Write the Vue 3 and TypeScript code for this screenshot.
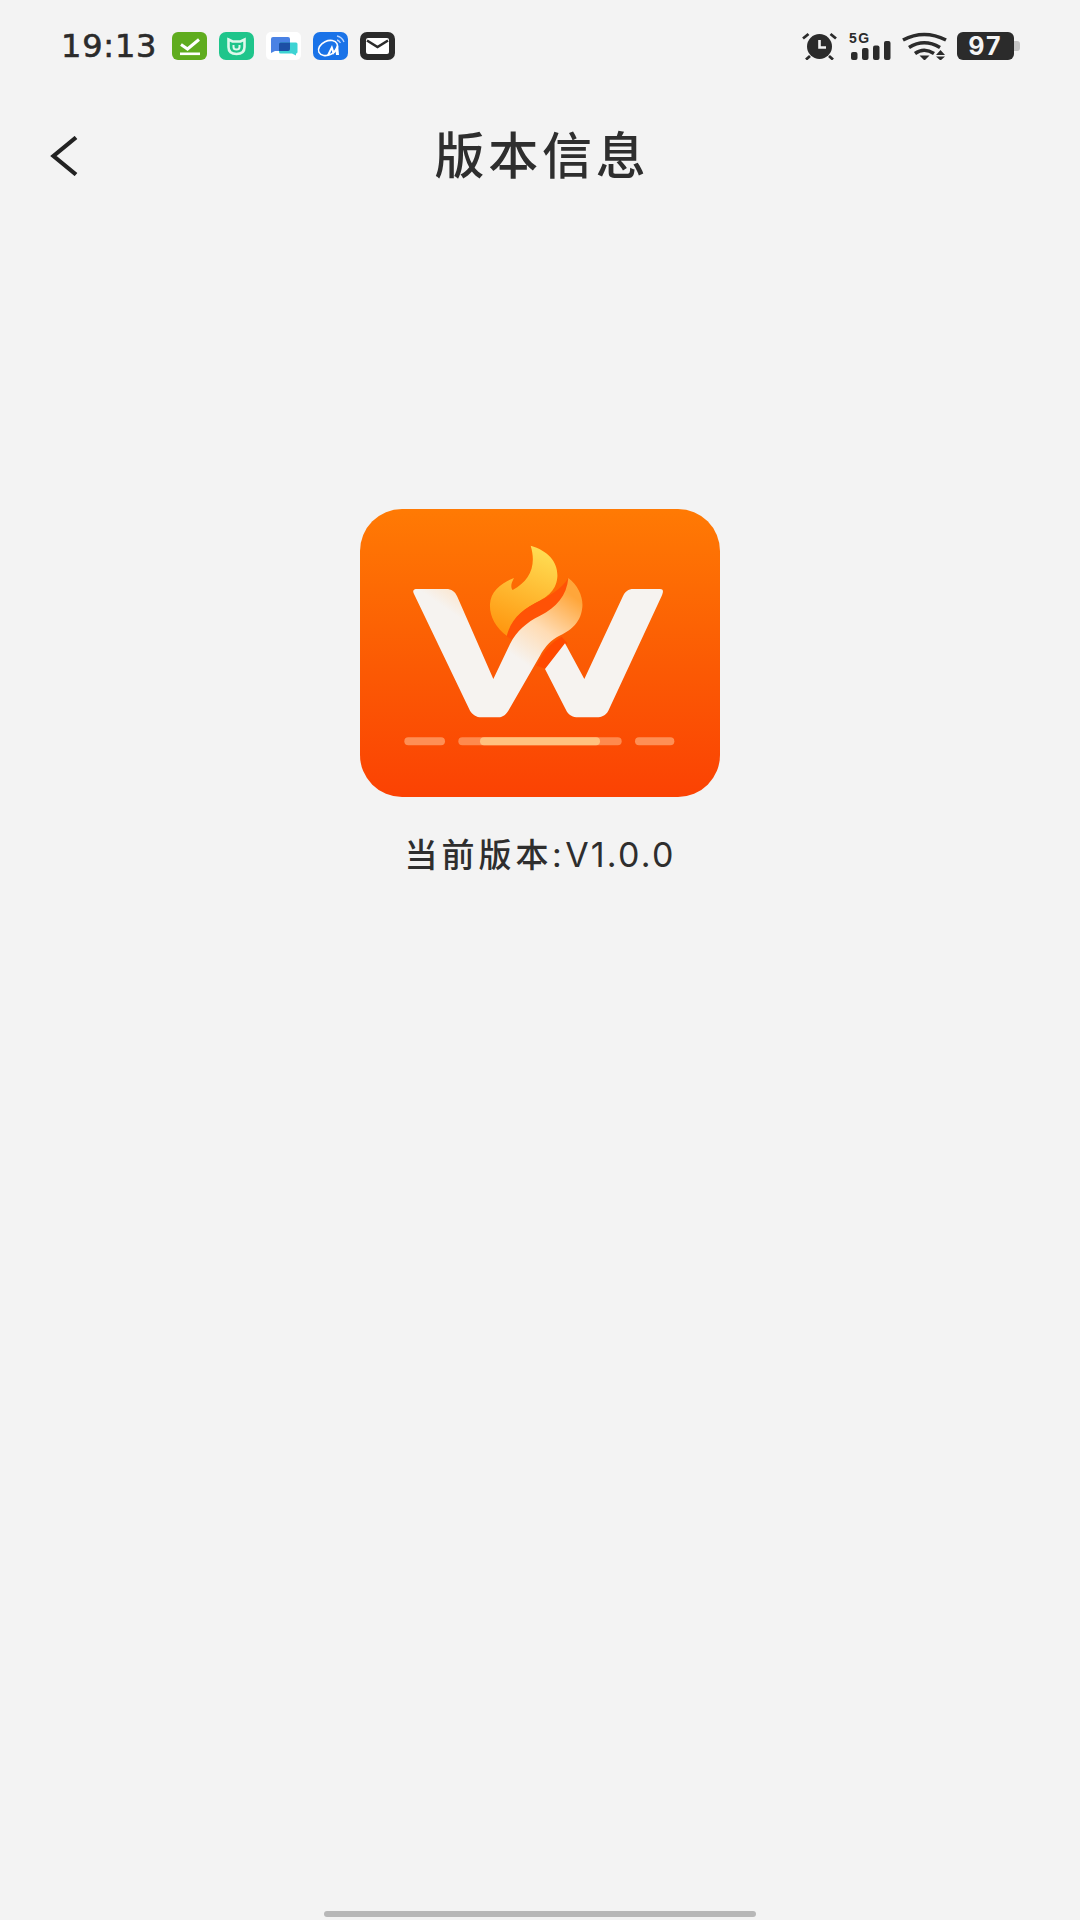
<template>
  <div class="page">
    <div class="status-bar">
      <span class="time">19:13</span>
      <div class="app-icons">
        <svg class="app-icon" viewBox="0 0 35 28">
          <rect width="35" height="28" rx="6" fill="#5fac1e" />
          <path d="M9 12.500l6.500 4.500L27 7.500" fill="none" stroke="#fff" stroke-width="3" />
          <rect x="8" y="20.500" width="20" height="2.600" fill="#fff" />
        </svg>
        <svg class="app-icon" viewBox="0 0 35 28">
          <rect width="35" height="28" rx="7" fill="#1fc58b" />
          <path d="M9.500 7.500l4 2h8l4-2V15q0 7-8 7t-8-7z" fill="none" stroke="#dff8ec" stroke-width="2.600" />
          <path d="M14.500 13v2q0 2.500 3 2.500t3-2.500v-2" fill="none" stroke="#dff8ec" stroke-width="2" />
        </svg>
        <svg class="app-icon" viewBox="0 0 35 28">
          <rect width="35" height="28" rx="5" fill="#fff" />
          <path d="M5 7q0-2 2-2h15q2 0 2 2v10q0 2-2 2H9l-4 2z" fill="#4a82e4" />
          <path d="M13 12q0-1.500 1.500-1.500H30q1.500 0 1.500 1.500v8q0 1.500-1.500 1.500v2l-4-2H14.500Q13 21.500 13 20z" fill="#3dd3d3" />
          <path d="M13 12q0-1.500 1.500-1.500H24V17q0 2-2 2h-9z" fill="#1d4fa5" />
        </svg>
        <svg class="app-icon" viewBox="0 0 35 28">
          <rect width="35" height="28" rx="7" fill="#1a73e8" />
          <ellipse cx="15" cy="16" rx="10" ry="7" transform="rotate(-25 15 16)" fill="none" stroke="#fff" stroke-width="1.600" />
          <path d="M14 23l5-10 2 6 4-7 1 11h-3l-.5-5-2.500 5-1.500-5-2 5z" fill="#fff" />
          <path d="M24 4q5 1 7 6M24 8q2 .5 3.500 3" fill="none" stroke="#bcd6ff" stroke-width="1.300" />
        </svg>
        <svg class="app-icon" viewBox="0 0 35 28">
          <rect width="35" height="28" rx="7" fill="#2b2b2b" />
          <rect x="6" y="6" width="23" height="16" rx="2" fill="#fff" />
          <path d="M7 8.500l10.500 6.500L28 8.500" fill="none" stroke="#2b2b2b" stroke-width="2.600" />
        </svg>
      </div>
      <div class="sys-icons">
        <svg class="alarm" viewBox="0 0 35 28">
          <circle cx="17.500" cy="14.500" r="12.500" fill="#2b2b2b" />
          <path d="M17.500 8v7.500h6.500" fill="none" stroke="#f3f3f3" stroke-width="2.600" />
          <path d="M1 6.500L6.500 2M34 6.500L28.500 2M8 24l-4 3.500M27 24l4 3.500" stroke="#2b2b2b" stroke-width="2.800" />
        </svg>
        <svg class="signal" viewBox="0 0 42 28">
          <text x="0" y="11" class="five-g">5G</text>
          <rect x="2" y="20" width="6.500" height="8" rx="2" fill="#2b2b2b" />
          <rect x="13" y="16" width="6.500" height="12" rx="2" fill="#2b2b2b" />
          <rect x="24" y="13.500" width="6.500" height="14.500" rx="2" fill="#2b2b2b" />
          <rect x="35" y="9" width="6.500" height="19" rx="2" fill="#2b2b2b" />
        </svg>
        <svg class="wifi" viewBox="0 0 45 28">
          <path d="M1 8Q22-3 44 8M7 15.500Q22 6 38 15.500M13 21.500Q22 15 32 21.500" fill="none" stroke="#2b2b2b" stroke-width="3.600" />
          <path d="M17.500 23.500h10l-5 5zM34 23l4.500-5 4.500 5zM34 24.500h9l-4.500 4z" fill="#2b2b2b" />
        </svg>
        <div class="battery">
          <span class="battery-body">97</span>
          <span class="battery-nub"></span>
        </div>
      </div>
    </div>

    <div class="nav-bar">
      <svg class="back" viewBox="0 0 28 40">
        <path d="M26 1.500L3.500 20 26 38.500" fill="none" stroke="#222" stroke-width="4.200" />
      </svg>
      <h1 class="title">版本信息</h1>
    </div>

    <main class="content">
      <div class="logo">
        <svg viewBox="60 55 1080 864">
          <defs>
            <linearGradient id="flame-top" x1="0.600" y1="0" x2="0.300" y2="1">
              <stop offset="0" stop-color="#ffdc52" />
              <stop offset="1" stop-color="#ff960f" />
            </linearGradient>
            <linearGradient id="flame-stripe" x1="0.300" y1="0.700" x2="0.850" y2="0.050">
              <stop offset="0.350" stop-color="#f6f3f0" />
              <stop offset="0.650" stop-color="#ffdcb4" />
              <stop offset="1" stop-color="#ffa63a" />
            </linearGradient>
          </defs>
          <path d="M572 165C625 180 655 215 652 260C648 305 615 322 585 338C540 362 512 395 502 437C465 410 448 375 450 340C452 305 480 278 522 262C512 280 512 290 518 298C570 270 590 225 572 165Z" fill="url(#flame-top)" />
          <path d="M500 437C512 390 540 362 585 338C630 315 665 295 685 262L700 310L600 400L520 450Z" fill="#ff5206" />
          <path d="M590 525C610 480 635 455 665 438L682 458L618 535Z" fill="#ff4a00" />
          <path d="M232 295H318C335 295 345 303 352 318L460 565L510 460C530 420 560 395 600 375C650 350 680 315 685 262C715 285 730 320 727 350C722 405 680 425 650 440C625 455 612 475 600 495L505 660C495 676 485 680 470 680H425C408 680 398 672 390 660L222 310C216 298 222 295 232 295Z" fill="url(#flame-stripe)" />
          <path d="M615 535L675 458L733 565L848 318C855 303 865 295 880 295H960C972 295 970 305 965 316L805 660C797 674 785 680 770 680H715C698 680 688 674 680 662Z" fill="#f6f3f0" />
          <rect x="193" y="740" width="122" height="24" rx="12" fill="#ffa06a" opacity="0.800" />
          <rect x="355" y="740" width="490" height="24" rx="12" fill="#ff9a62" opacity="0.800" />
          <rect x="420" y="740" width="360" height="24" rx="12" fill="#ffc27f" />
          <rect x="885" y="740" width="118" height="24" rx="12" fill="#ffa06a" opacity="0.800" />
        </svg>
      </div>
      <p class="version">当前版本:<span class="version-no">V1.0.0</span></p>
    </main>

    <div class="home-indicator"></div>
  </div>
</template>

<script setup lang="ts">
</script>

<style>
body {
  background: #f3f3f3;
}
</style>

<style scoped>
.page {
  display: flex;
  flex-direction: column;
  width: 1080px;
  height: 1920px;
  background: #f3f3f3;
  color: #2b2b2b;
  font-family: "Roboto", "Noto Sans CJK SC", sans-serif;
  overflow: hidden;
}
.status-bar {
  display: flex;
  align-items: center;
  height: 28px;
  padding: 32px 60px 32px 61px;
}
.time {
  width: 111px;
  font-family: "DejaVu Sans", sans-serif;
  font-size: 32px;
  letter-spacing: 0.800px;
  -webkit-text-stroke: 0.600px #2b2b2b;
  white-space: nowrap;
}
.app-icons {
  display: flex;
  gap: 12px;
}
.app-icon {
  display: block;
  width: 35px;
  height: 28px;
}
.sys-icons {
  display: flex;
  align-items: center;
  margin-left: auto;
}
.alarm {
  display: block;
  width: 35px;
  height: 28px;
}
.signal {
  display: block;
  width: 42px;
  height: 28px;
  margin-left: 12px;
  overflow: visible;
}
.five-g {
  font-family: "Liberation Sans", sans-serif;
  font-size: 14px;
  font-weight: 700;
  letter-spacing: 1.500px;
  fill: #2b2b2b;
}
.wifi {
  display: block;
  width: 45px;
  height: 28px;
  margin-left: 11px;
}
.battery {
  display: flex;
  align-items: center;
  margin-left: 10px;
}
.battery-body {
  width: 57px;
  height: 28px;
  border-radius: 6px;
  background: #2b2b2b;
  color: #f5f5f5;
  font-family: "Inter", sans-serif;
  font-size: 25px;
  font-weight: 700;
  letter-spacing: 2px;
  line-height: 28px;
  text-align: center;
}
.battery-nub {
  width: 6px;
  height: 10px;
  border-radius: 0 3px 3px 0;
  background: #c4c4c4;
}
.nav-bar {
  position: relative;
  display: flex;
  align-items: center;
  justify-content: center;
  height: 130px;
}
.back {
  position: absolute;
  left: 50px;
  top: 44px;
  width: 28px;
  height: 40px;
}
.title {
  margin: 0;
  padding-left: 4px;
  font-size: 50px;
  font-weight: 500;
  letter-spacing: 3.800px;
  line-height: 1;
  color: #2e2e2e;
}
.content {
  display: flex;
  flex-direction: column;
  align-items: center;
  padding-top: 287px;
}
.logo {
  width: 360px;
  height: 288px;
  border-radius: 42px;
  background: linear-gradient(180deg, #ff7a04 0%, #fb5a04 55%, #fb4203 100%);
  overflow: hidden;
}
.logo svg {
  display: block;
  width: 100%;
  height: 100%;
  filter: blur(0.6px);
}
.version {
  margin: 38px 0 0;
  font-size: 33px;
  font-weight: 500;
  line-height: 40px;
  letter-spacing: 4px;
  color: #2e2e2e;
}
.version-no {
  font-family: "Inter", sans-serif;
  font-size: 34px;
  font-weight: 400;
  letter-spacing: 2.200px;
}
.home-indicator {
  width: 432px;
  height: 6px;
  margin: auto auto 3px;
  border-radius: 3px;
  background: #b7b7b7;
}
</style>
